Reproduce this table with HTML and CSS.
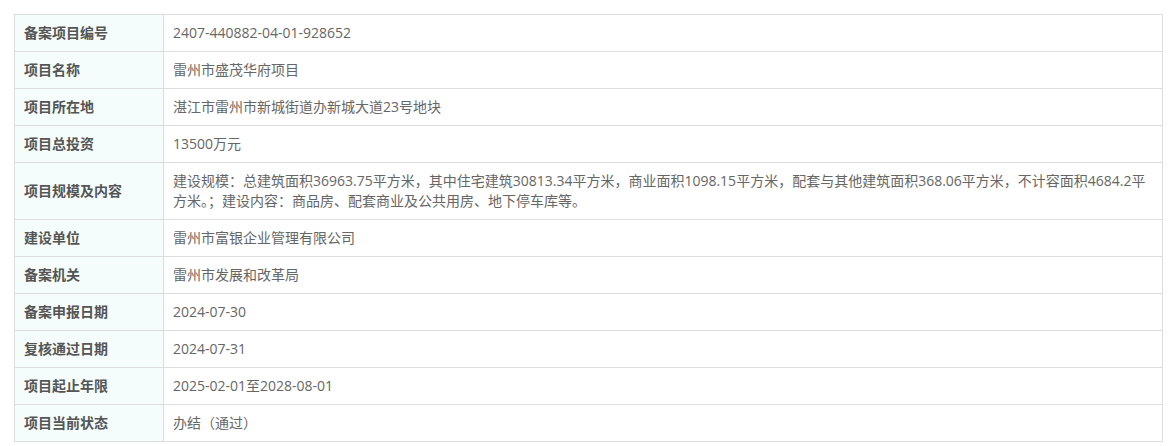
FILE: index.html
```html
<!DOCTYPE html>
<html lang="zh-CN">
<head>
    <meta charset="UTF-8">
    <meta name="viewport" content="width=device-width, initial-scale=1.0">
    <title>备案项目信息</title>
    <link rel="stylesheet" href="styles.css">
</head>
<body>
    <div class="container">
        <table class="info-table">
            <tr><th>备案项目编号</th><td>2407-440882-04-01-928652</td></tr>
            <tr><th>项目名称</th><td>雷州市盛茂华府项目</td></tr>
            <tr><th>项目所在地</th><td>湛江市雷州市新城街道办新城大道23号地块</td></tr>
            <tr><th>项目总投资</th><td>13500万元</td></tr>
            <tr><th>项目规模及内容</th><td>建设规模：总建筑面积36963.75平方米，其中住宅建筑30813.34平方米，商业面积1098.15平方米，配套与其他建筑面积368.06平方米，不计容面积4684.2平方米。；建设内容：商品房、配套商业及公共用房、地下停车库等。</td></tr>
            <tr><th>建设单位</th><td>雷州市富银企业管理有限公司</td></tr>
            <tr><th>备案机关</th><td>雷州市发展和改革局</td></tr>
            <tr><th>备案申报日期</th><td>2024-07-30</td></tr>
            <tr><th>复核通过日期</th><td>2024-07-31</td></tr>
            <tr><th>项目起止年限</th><td>2025-02-01至2028-08-01</td></tr>
            <tr><th>项目当前状态</th><td>办结（通过）</td></tr>
        </table>
    </div>
</body>
</html>
```

FILE: styles.css
```css
body {
    font-family: "Open Sans", "Noto Sans CJK SC", sans-serif;
    font-size: 14px;
    margin: 0;
    padding: 0;
    background: #fff;
}
.container {
    padding: 14px 10px 0 14px;
}
.info-table {
    width: 1149px;
    border-collapse: collapse;
    table-layout: fixed;
}
.info-table th,
.info-table td {
    border: 1px solid #dddddd;
    padding: 8px 9px;
    line-height: 20px;
    text-align: left;
    vertical-align: middle;
}
.info-table th {
    width: 130px;
    background-color: #f4fcfc;
    color: #555;
    font-weight: bold;
}
.info-table td {
    color: #666;
    font-weight: normal;
}
```
